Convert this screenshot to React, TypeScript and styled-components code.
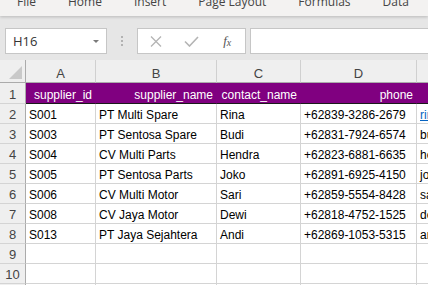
import styled, { createGlobalStyle } from "styled-components";

const tabs = ["File", "Home", "Insert", "Page Layout", "Formulas", "Data"];
const columns = ["A", "B", "C", "D", "E"];
const headers = ["supplier_id", "supplier_name", "contact_name", "phone", "email"];

const suppliers = [
  ["S001", "PT Multi Spare", "Rina", "+62839-3286-2679", "rina@multispare.co.id"],
  ["S003", "PT Sentosa Spare", "Budi", "+62831-7924-6574", "budi@sentosaspare.co.id"],
  ["S004", "CV Multi Parts", "Hendra", "+62823-6881-6635", "hendra@multiparts.co.id"],
  ["S005", "PT Sentosa Parts", "Joko", "+62891-6925-4150", "joko@sentosaparts.co.id"],
  ["S006", "CV Multi Motor", "Sari", "+62859-5554-8428", "sari@multimotor.co.id"],
  ["S008", "CV Jaya Motor", "Dewi", "+62818-4752-1525", "dewi@jayamotor.co.id"],
  ["S013", "PT Jaya Sejahtera", "Andi", "+62869-1053-5315", "andi@jayasejahtera.co.id"],
];

const emptyRows = [9, 10, 11, 12];

const App = () => {
  return (
    <>
      <GlobalStyle />
      <Window>
        <TabBar>
          {tabs.map((t) => (
            <Tab key={t}>{t}</Tab>
          ))}
        </TabBar>

        <FormulaBar>
          <NameBox>
            H16
            <Caret />
          </NameBox>
          <Grip>
            <i />
            <i />
            <i />
          </Grip>
          <ActionBox>
            <ActionIcon>
              <svg width="12" height="11" viewBox="0 0 12 11">
                <path d="M1 0.5 L11 10.5 M11 0.5 L1 10.5" stroke="#b4b4b4" strokeWidth="1.3" fill="none" />
              </svg>
            </ActionIcon>
            <ActionIcon>
              <svg width="15" height="11" viewBox="0 0 15 11">
                <path d="M1 5.5 L5.5 10 L14 1" stroke="#b4b4b4" strokeWidth="1.6" fill="none" />
              </svg>
            </ActionIcon>
            <ActionIcon>
              <Fx>
                f<sub>x</sub>
              </Fx>
            </ActionIcon>
          </ActionBox>
          <FormulaInput />
        </FormulaBar>

        <Sheet>
          <Corner>
            <svg width="13" height="13" viewBox="0 0 13 13">
              <polygon points="13,0 13,13 0,13" fill="#c9c9c9" />
            </svg>
          </Corner>
          {columns.map((c) => (
            <ColHead key={c}>{c}</ColHead>
          ))}

          <RowHead>1</RowHead>
          {headers.map((h) => (
            <Cell key={h} $head $align="right">
              {h}
            </Cell>
          ))}

          {suppliers.map((row, i) => (
            <Row key={row[0]} index={i + 2} values={row} />
          ))}

          {emptyRows.map((n) => (
            <Row key={n} index={n} values={["", "", "", "", ""]} />
          ))}
        </Sheet>
      </Window>
    </>
  );
};

const Row = ({ index, values }: { index: number; values: string[] }) => (
  <>
    <RowHead>{index}</RowHead>
    {values.map((v, i) => (
      <Cell key={i}>{i === 4 && index === 2 ? <Link>{v}</Link> : v}</Cell>
    ))}
  </>
);

export default App;

const GlobalStyle = createGlobalStyle`
  html, body {
    margin: 0;
    padding: 0;
    overflow: hidden;
    background: #ffffff;
  }
`;

const Window = styled.div`
  width: 428px;
  height: 285px;
  overflow: hidden;
  font-family: "Liberation Sans", Arial, sans-serif;
`;

const TabBar = styled.div`
  position: relative;
  z-index: 1;
  height: 16px;
  display: flex;
  align-items: flex-end;
  padding-left: 1px;
  background: #f3f2f1;
  box-shadow: 0 1px 3px rgba(0, 0, 0, 0.2);
  overflow: hidden;
`;

const Tab = styled.div`
  padding: 0 16px 8px;
  font-family: "Open Sans", "Noto Sans", sans-serif;
  font-size: 12px;
  line-height: 13px;
  color: #444444;
  white-space: nowrap;
`;

const FormulaBar = styled.div`
  height: 44px;
  box-sizing: border-box;
  display: flex;
  align-items: flex-start;
  padding: 12px 0 0 5px;
  background: #e6e6e6;
`;

const NameBox = styled.div`
  width: 102px;
  height: 26px;
  box-sizing: border-box;
  display: flex;
  align-items: center;
  justify-content: space-between;
  padding: 0 7px 0 7px;
  background: #ffffff;
  border: 1px solid #c6c6c6;
  font-family: "Open Sans", "Noto Sans", sans-serif;
  font-size: 13px;
  color: #333333;
`;

const Caret = styled.span`
  width: 0;
  height: 0;
  border-left: 3.5px solid transparent;
  border-right: 3.5px solid transparent;
  border-top: 3.5px solid #7a7a7a;
`;

const Grip = styled.div`
  width: 30px;
  height: 26px;
  display: flex;
  flex-direction: column;
  align-items: center;
  justify-content: center;
  gap: 2px;

  i {
    width: 2px;
    height: 2px;
    background: #b2b2b2;
  }
`;

const ActionBox = styled.div`
  width: 109px;
  height: 26px;
  box-sizing: border-box;
  display: grid;
  grid-template-columns: repeat(3, 1fr);
  background: #ffffff;
  border: 1px solid #c6c6c6;
  margin-right: 4px;
`;

const ActionIcon = styled.div`
  display: flex;
  align-items: center;
  justify-content: center;
`;

const Fx = styled.span`
  font-family: "Liberation Serif", "Times New Roman", serif;
  font-style: italic;
  font-size: 13px;
  color: #555555;
  line-height: 1;

  sub {
    font-size: 10px;
    vertical-align: -1px;
  }
`;

const FormulaInput = styled.div`
  flex: 1;
  height: 26px;
  box-sizing: border-box;
  background: #ffffff;
  border: 1px solid #c6c6c6;
  margin-right: -2px;
`;

const Sheet = styled.div`
  display: grid;
  grid-template-columns: 26px 70px 121px 84px 116px 160px;
  grid-template-rows: 23px 21px;
  grid-auto-rows: 20px;
  width: max-content;
`;

const Corner = styled.div`
  box-sizing: border-box;
  display: flex;
  align-items: flex-end;
  justify-content: flex-end;
  padding: 0 3px 3px 0;
  background: #efefef;
  border-right: 1px solid #ababab;
  border-bottom: 1px solid #ababab;
`;

const ColHead = styled.div`
  box-sizing: border-box;
  display: flex;
  align-items: flex-end;
  justify-content: center;
  padding-bottom: 1px;
  background: #efefef;
  border-right: 1px solid #d0d0d0;
  border-bottom: 1px solid #ababab;
  font-size: 13px;
  line-height: 14px;
  color: #444444;
`;

const RowHead = styled.div`
  box-sizing: border-box;
  display: flex;
  align-items: flex-end;
  justify-content: center;
  padding-bottom: 1px;
  background: #efefef;
  border-right: 1px solid #ababab;
  border-bottom: 1px solid #d4d4d4;
  font-size: 13px;
  line-height: 14px;
  color: #444444;
`;

const Cell = styled.div<{ $head?: boolean; $align?: "left" | "right" }>`
  box-sizing: border-box;
  display: flex;
  align-items: flex-end;
  justify-content: ${({ $align }) => ($align === "right" ? "flex-end" : "flex-start")};
  padding: 0 3px 1px 3px;
  overflow: hidden;
  white-space: nowrap;
  font-size: 12px;
  line-height: 14px;
  background: ${({ $head }) => ($head ? "#800080" : "#ffffff")};
  color: ${({ $head }) => ($head ? "#ffffff" : "#000000")};
  border-right: 1px solid ${({ $head }) => ($head ? "#800080" : "#d4d4d4")};
  border-bottom: 1px solid ${({ $head }) => ($head ? "#1a1a1a" : "#d4d4d4")};
`;

const Link = styled.span`
  color: #0563c1;
  text-decoration: underline;
`;
